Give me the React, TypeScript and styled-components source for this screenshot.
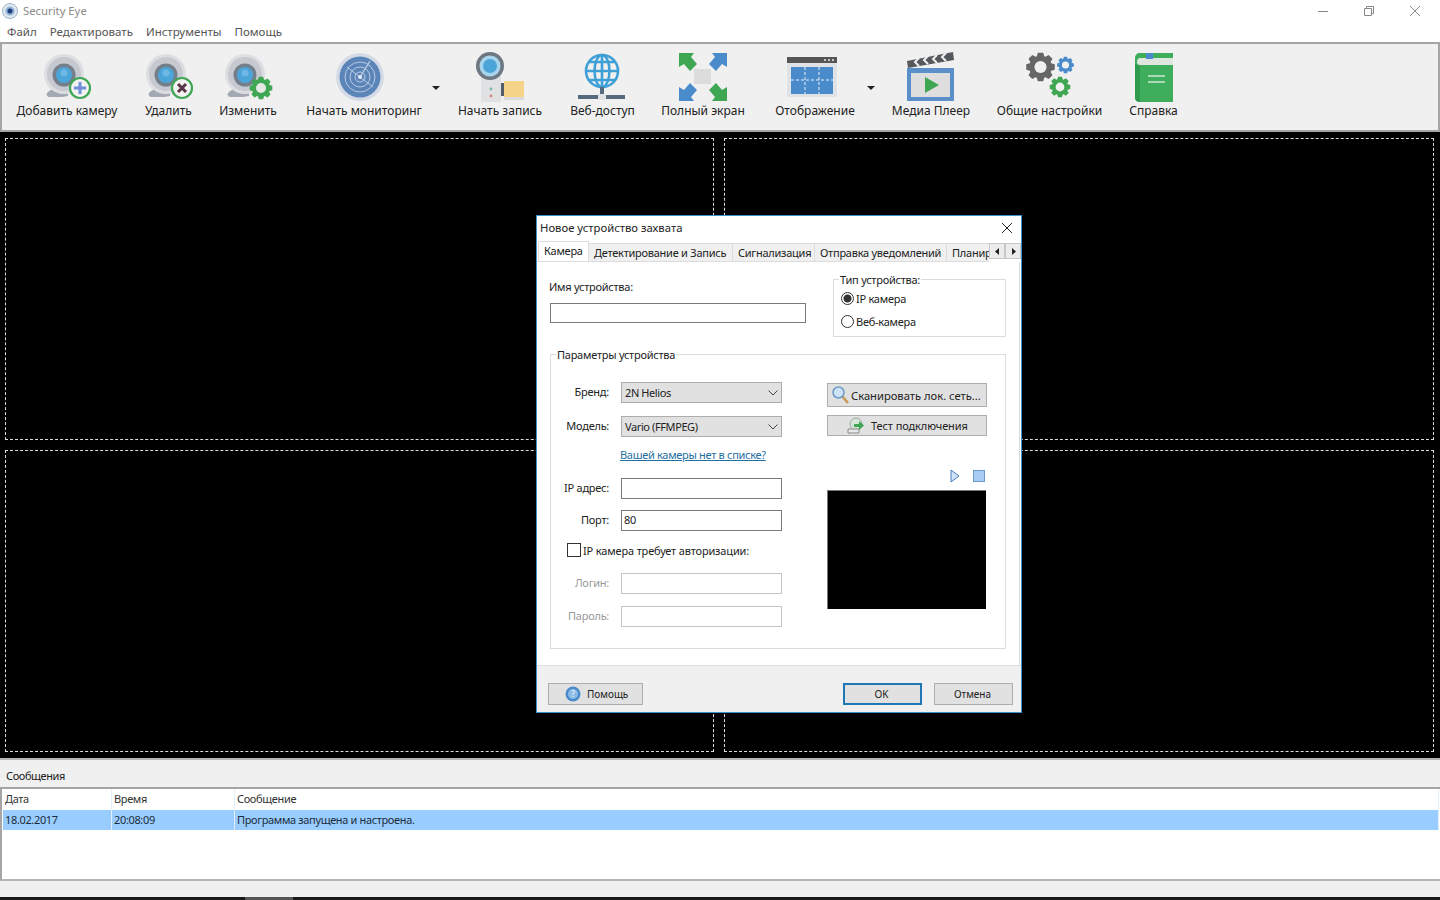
import styled, { createGlobalStyle } from "styled-components";

const GlobalStyle = createGlobalStyle`
  html, body {
    margin: 0;
    padding: 0;
    background: #f0f0f0;
    font-family: "Noto Sans", "Open Sans", "Liberation Sans", sans-serif;
    font-size: 11px;
    color: #222;
  }
  * { box-sizing: border-box; }
`;

const gearPath = (cx: number, cy: number, outer: number, inner: number, teeth: number) => {
  const points: string[] = [];
  const step = (Math.PI * 2) / teeth;
  for (let i = 0; i < teeth; i++) {
    const a = i * step;
    const corners: [number, number][] = [
      [inner, a - step * 0.42],
      [outer, a - step * 0.24],
      [outer, a + step * 0.24],
      [inner, a + step * 0.42],
    ];
    corners.forEach(([r, t]) => {
      points.push(`${(cx + r * Math.cos(t)).toFixed(2)} ${(cy + r * Math.sin(t)).toFixed(2)}`);
    });
  }
  return `M${points.join("L")}Z`;
};

const Gear = ({ cx, cy, r, color, hole }: { cx: number; cy: number; r: number; color: string; hole: string }) => (
  <>
    <path d={gearPath(cx, cy, r, r * 0.78, 8)} fill={color} />
    <circle cx={cx} cy={cy} r={r * 0.42} fill={hole} />
  </>
);

type Badge = "plus" | "cross" | "gear";

const WebcamIcon = ({ badge }: { badge: Badge }) => (
  <svg width="50" height="50" viewBox="-2 0 50 50">
    <path d="M3 41c3-4 9-5 15-5l6 2v6l-6 1H6c-3 0-4-2-3-4z" fill="#a3a9b3" />
    <circle cx="20" cy="22" r="20" fill="#dcdee2" />
    <circle cx="20" cy="22" r="17" fill="#c6c9cf" />
    <circle cx="20" cy="23" r="11.5" fill="#747f8b" />
    <circle cx="20" cy="23" r="8" fill="#4ca5d8" />
    <circle cx="20" cy="21" r="3.5" fill="#6db8e4" />
    {badge === "gear" ? (
      <>
        <path d={gearPath(36, 36, 11.5, 9, 8)} fill="#3fa653" />
        <circle cx="36" cy="36" r="5" fill="#e6e8e6" />
      </>
    ) : (
      <circle cx="36" cy="36" r="10" fill="#f2f2f2" stroke="#3fa653" strokeWidth="2.2" />
    )}
    {badge === "plus" && <path d="M36 30v12M30 36h12" stroke="#6f8fd6" strokeWidth="3" />}
    {badge === "cross" && <path d="M32 32l8 8M40 32l-8 8" stroke="#5a3346" strokeWidth="3" />}
  </svg>
);

const RadarIcon = () => (
  <svg width="58" height="50" viewBox="0 0 58 50">
    <circle cx="25" cy="25" r="24" fill="#d5dbe6" />
    <circle cx="25" cy="25" r="20.500" fill="#5b84b8" />
    <g fill="none" stroke="#b8cbe2" strokeWidth="1">
      <circle cx="25" cy="25" r="15" />
      <circle cx="25" cy="25" r="10" />
      <circle cx="25" cy="25" r="5" />
      <path d="M25 25l10-16" strokeWidth="1.400" />
      <path d="M12 15l26 20" />
    </g>
    <circle cx="25" cy="25" r="2" fill="#e4edf6" />
  </svg>
);

const RecordIcon = () => (
  <svg width="50" height="50" viewBox="0 0 50 50">
    <rect x="6" y="24" width="20" height="26" rx="1" fill="#e0e1e3" />
    <circle cx="16" cy="37" r="1.400" fill="#7ab8a8" />
    <circle cx="16" cy="44" r="1.400" fill="#d8827a" />
    <circle cx="15" cy="14" r="14" fill="#6e7882" />
    <circle cx="15" cy="14" r="10.500" fill="#a8d4ee" />
    <circle cx="15" cy="14" r="7" fill="#4ca5d8" />
    <rect x="26" y="31" width="3" height="13" fill="#555e68" />
    <rect x="29" y="29" width="20" height="16" fill="#f5d48a" />
    <rect x="29" y="45" width="20" height="3" fill="#dcdcdc" />
  </svg>
);

const GlobeIcon = () => (
  <svg width="50" height="50" viewBox="0 0 50 50">
    <g fill="none" stroke="#3fa0d8" strokeWidth="2.600">
      <circle cx="24" cy="19" r="16" />
      <ellipse cx="24" cy="19" rx="7.500" ry="16" />
      <path d="M24 3v32M8 19h32M11 10h26M11 28h26" />
    </g>
    <rect x="22" y="35" width="4" height="8" fill="#556a7c" />
    <rect x="0" y="43" width="47" height="4" fill="#556a7c" />
    <rect x="20" y="42" width="8" height="6" fill="#dfe3e6" />
  </svg>
);

const FullscreenIcon = () => (
  <svg width="50" height="50" viewBox="0 0 50 50">
    <rect x="16" y="17" width="17" height="15" fill="#dcdcdc" />
    <path d="M1 1h15l-3 4 6 7-7 7-6-7-5 3z" fill="#3fa653" />
    <path d="M49 1H34l3 4-6 7 7 7 6-7 5 3z" fill="#4a8ccb" />
    <path d="M1 49h15l-3-4 6-7-7-7-6 7-5-3z" fill="#4a8ccb" />
    <path d="M49 49H34l3-4-6-7 7-7 6 7 5-3z" fill="#3fa653" />
  </svg>
);

const DisplayIcon = () => (
  <svg width="56" height="50" viewBox="0 0 56 50">
    <rect x="0" y="5" width="50" height="40" fill="#dfe3e8" />
    <rect x="0" y="5" width="50" height="6" fill="#555" />
    <path d="M37 8h2M41 8h2M45 8h2" stroke="#eee" strokeWidth="1.600" />
    <rect x="4" y="15" width="42" height="27" fill="#4a8ccb" />
    <path d="M4 28h42M18 15v27M32 15v27" stroke="#e8f0f8" strokeWidth="1" strokeDasharray="3 2" />
  </svg>
);

const ClapperIcon = () => (
  <svg width="50" height="50" viewBox="0 0 50 50">
    <path d="M1 9l46-9 1 8-46 8z" fill="#55585c" />
    <path d="M13 6l-4 4 4 4M22 4l-4 4 4 4M31 3l-4 4 4 4M40 1l-4 4 4 4" fill="none" stroke="#f0f0f0" strokeWidth="2" />
    <rect x="1" y="16" width="47" height="33" fill="#5b8fc9" />
    <rect x="5" y="21" width="39" height="24" fill="#dedede" />
    <path d="M19 25l14 8-14 8z" fill="#3fa653" />
  </svg>
);

const GearsIcon = () => (
  <svg width="60" height="50" viewBox="0 0 60 50">
    <Gear cx={20.500} cy={15} r={14.500} color="#666" hole="#f0f0f0" />
    <Gear cx={45.500} cy={13} r={8.500} color="#4a8ccb" hole="#f0f0f0" />
    <Gear cx={40} cy={35} r={10.500} color="#3fa653" hole="#f0f0f0" />
  </svg>
);

const BookIcon = () => (
  <svg width="40" height="50" viewBox="0 0 40 50">
    <path d="M1 6c0-3 2-5 5-5h33v49H6c-3 0-5-2-5-4z" fill="#3fae5c" />
    <path d="M3 10c0-2 1-4 3-4h33v7H6c-2 0-3-1-3-3z" fill="#dfe5df" />
    <rect x="12" y="1" width="7" height="6" fill="#4a8ccb" />
    <path d="M14 24h17M14 30h17" stroke="#cfe8d6" strokeWidth="1.600" />
    <path d="M1 12v34c0 2 2 4 5 4V14z" fill="#2f9a4c" />
  </svg>
);

const SearchIcon = () => (
  <svg width="18" height="18" viewBox="0 0 18 18">
    <path d="M10 10l6 7" stroke="#c89a55" strokeWidth="2.600" />
    <circle cx="6.500" cy="6.500" r="5.500" fill="#cfe3f7" stroke="#6d9ac8" strokeWidth="1.500" />
  </svg>
);

const LinkTestIcon = () => (
  <svg width="18" height="18" viewBox="0 0 18 18">
    <circle cx="9" cy="7" r="6" fill="#d8e6d8" stroke="#9aa8a0" />
    <path d="M1 16h11v-4H1z" fill="#e8e8e8" stroke="#888" />
    <path d="M7 7h5V4l5 4.500-5 4.500v-3H7z" fill="#3fa653" />
  </svg>
);

const HelpIcon = () => (
  <svg width="16" height="16" viewBox="0 0 16 16">
    <circle cx="8" cy="8" r="7.500" fill="#4a8ccb" />
    <circle cx="8" cy="8" r="5" fill="#8dbce6" />
    <text x="8" y="11" fontSize="8" textAnchor="middle" fill="#fff">?</text>
  </svg>
);

const Chevron = () => (
  <svg width="10" height="6" viewBox="0 0 10 6">
    <path d="M0.500 0.500L5 5l4.500-4.500" fill="none" stroke="#444" />
  </svg>
);

const tools = [
  { label: "Добавить камеру", w: 128, icon: <WebcamIcon badge="plus" /> },
  { label: "Удалить", w: 75, icon: <WebcamIcon badge="cross" /> },
  { label: "Изменить", w: 84, icon: <WebcamIcon badge="gear" /> },
  { label: "Начать мониторинг", w: 148, caret: -6, icon: <RadarIcon /> },
  { label: "Начать запись", w: 124, icon: <RecordIcon /> },
  { label: "Веб-доступ", w: 81, icon: <GlobeIcon /> },
  { label: "Полный экран", w: 120, icon: <FullscreenIcon /> },
  { label: "Отображение", w: 104, caret: 0, icon: <DisplayIcon /> },
  { label: "Медиа Плеер", w: 112, icon: <ClapperIcon /> },
  { label: "Общие настройки", w: 125, icon: <GearsIcon /> },
  { label: "Справка", w: 83, icon: <BookIcon /> },
];

const tabs = ["Камера", "Детектирование и Запись", "Сигнализация", "Отправка уведомлений", "Планирование"];
const tabWidths = [51, 144, 82, 132, 60];

const App = () => {
  return (
    <Window>
      <GlobalStyle />
      <TitleBar>
        <AppLogo />
        <AppTitle>Security Eye</AppTitle>
        <WindowControls>
          <svg width="12" height="12" viewBox="0 0 12 12"><path d="M1 6.500h10" stroke="#888" /></svg>
          <svg width="12" height="12" viewBox="0 0 12 12"><path d="M1.500 3.500h7v7h-7zM3.500 3.500v-2h7v7h-2" fill="none" stroke="#888" /></svg>
          <svg width="12" height="12" viewBox="0 0 12 12"><path d="M1 1l10 10M11 1L1 11" stroke="#888" /></svg>
        </WindowControls>
      </TitleBar>
      <MenuBar>
        <span>Файл</span>
        <span>Редактировать</span>
        <span>Инструменты</span>
        <span>Помощь</span>
      </MenuBar>
      <Toolbar>
        {tools.map((tool) => (
          <ToolGroup key={tool.label}>
            <ToolItem $w={tool.w}>
              <ToolIcon>{tool.icon}</ToolIcon>
              <ToolLabel>{tool.label}</ToolLabel>
            </ToolItem>
            {tool.caret !== undefined && <Caret $pull={tool.caret} />}
          </ToolGroup>
        ))}
      </Toolbar>
      <VideoGrid>
        <VideoSlot />
        <VideoSlot />
        <VideoSlot />
        <VideoSlot />
      </VideoGrid>
      <MessagesHeader>Сообщения</MessagesHeader>
      <MessagesTable>
        <TableRow>
          <TableCell>Дата</TableCell>
          <TableCell>Время</TableCell>
          <TableCell>Сообщение</TableCell>
        </TableRow>
        <TableRow $selected>
          <TableCell>18.02.2017</TableCell>
          <TableCell>20:08:09</TableCell>
          <TableCell>Программа запущена и настроена.</TableCell>
        </TableRow>
      </MessagesTable>
      <StatusBar />
      <TaskStrip>
        <TaskThumb />
      </TaskStrip>

      <Dialog>
        <DialogTitle>
          Новое устройство захвата
          <svg width="12" height="12" viewBox="0 0 12 12"><path d="M1 1l10 10M11 1L1 11" stroke="#222" /></svg>
        </DialogTitle>
        <TabStrip>
          <TabList>
            {tabs.map((tab, i) => (
              <Tab key={tab} $active={i === 0} $w={tabWidths[i]}>{tab}</Tab>
            ))}
          </TabList>
          <TabArrow>
            <svg width="5" height="7" viewBox="0 0 5 7"><path d="M4 0v7L0 3.500z" fill="#222" /></svg>
          </TabArrow>
          <TabArrow>
            <svg width="5" height="7" viewBox="0 0 5 7"><path d="M1 0v7l4-3.500z" fill="#222" /></svg>
          </TabArrow>
        </TabStrip>
        <TabPanel>
          <TopRow>
            <NameColumn>
              <FieldCaption>Имя устройства:</FieldCaption>
              <NameInput />
            </NameColumn>
            <TypeGroup>
              <GroupLegend>Тип устройства:</GroupLegend>
              <RadioRow>
                <Radio $checked />
                IP камера
              </RadioRow>
              <RadioRow>
                <Radio />
                Веб-камера
              </RadioRow>
            </TypeGroup>
          </TopRow>
          <ParamsGroup>
            <GroupLegend>Параметры устройства</GroupLegend>
            <FormColumn>
              <FormRow>
                <RowLabel>Бренд:</RowLabel>
                <SelectBox>
                  <span>2N Helios</span>
                  <Chevron />
                </SelectBox>
              </FormRow>
              <FormRow $mt={13}>
                <RowLabel>Модель:</RowLabel>
                <SelectBox>
                  <span>Vario (FFMPEG)</span>
                  <Chevron />
                </SelectBox>
              </FormRow>
              <LinkRow>Вашей камеры нет в списке?</LinkRow>
              <FormRow $mt={13}>
                <RowLabel>IP адрес:</RowLabel>
                <TextField />
              </FormRow>
              <FormRow $mt={11}>
                <RowLabel>Порт:</RowLabel>
                <TextField>80</TextField>
              </FormRow>
              <CheckRow>
                <CheckBox />
                IP камера требует авторизации:
              </CheckRow>
              <FormRow $mt={12}>
                <RowLabel $disabled>Логин:</RowLabel>
                <TextField $disabled />
              </FormRow>
              <FormRow $mt={12}>
                <RowLabel $disabled>Пароль:</RowLabel>
                <TextField $disabled />
              </FormRow>
            </FormColumn>
            <SideColumn>
              <ScanButton>
                <SearchIcon />
                Сканировать лок. сеть...
              </ScanButton>
              <TestButton>
                <LinkTestIcon />
                <span>Тест подключения</span>
              </TestButton>
              <PreviewControls>
                <svg width="10" height="14" viewBox="0 0 10 14"><path d="M1 1l8 6-8 6z" fill="#cfe2f7" stroke="#4a7fb8" /></svg>
                <svg width="12" height="12" viewBox="0 0 12 12"><rect x="0.500" y="0.500" width="11" height="11" fill="#a9cdf2" stroke="#6d9ac8" /></svg>
              </PreviewControls>
              <Preview />
            </SideColumn>
          </ParamsGroup>
        </TabPanel>
        <DialogFooter>
          <HelpButton>
            <HelpIcon />
            Помощь
          </HelpButton>
          <FooterActions>
            <FooterButton $primary>OK</FooterButton>
            <FooterButton>Отмена</FooterButton>
          </FooterActions>
        </DialogFooter>
      </Dialog>
    </Window>
  );
};

export default App;

const Window = styled.div`
  position: relative;
  width: 1440px;
  height: 900px;
  display: flex;
  flex-direction: column;
  overflow: hidden;
  background: #f0f0f0;
`;

const TitleBar = styled.div`
  height: 22px;
  background: #fff;
  display: flex;
  align-items: center;
  padding-left: 2px;
`;

const AppLogo = styled.div`
  width: 16px;
  height: 16px;
  border-radius: 50%;
  background: radial-gradient(circle, #1f3f7a 0 2px, #8fb2d8 3px 4px, #dfe7ef 5px 8px);
  border: 1px solid #9cb4c8;
`;

const AppTitle = styled.div`
  margin-left: 5px;
  padding-bottom: 1px;
  color: #8a8a8a;
  font-size: 11.300px;
`;

const WindowControls = styled.div`
  margin-left: auto;
  padding-right: 19px;
  display: flex;
  gap: 34px;
  svg {
    display: block;
  }
`;

const MenuBar = styled.div`
  height: 20px;
  background: #fff;
  display: flex;
  align-items: center;
  gap: 13px;
  padding: 0 0 1px 7px;
  color: #555;
  font-size: 11.500px;
`;

const Toolbar = styled.div`
  height: 90px;
  border: 2px solid #a5a5a5;
  background: #f0f0f0;
  display: flex;
  align-items: flex-start;
  padding: 8px 0 0 1px;
`;

const ToolGroup = styled.div`
  display: flex;
  align-items: flex-start;
`;

const ToolItem = styled.div<{ $w: number }>`
  width: ${(p) => p.$w}px;
  display: flex;
  flex-direction: column;
  align-items: center;
`;

const ToolIcon = styled.div`
  height: 50px;
  display: flex;
  justify-content: center;
  svg {
    display: block;
  }
`;

const ToolLabel = styled.div`
  margin-top: 1px;
  font-size: 12px;
  line-height: 16px;
  white-space: nowrap;
  color: #222;
`;

const Caret = styled.div<{ $pull: number }>`
  width: 8px;
  height: 4px;
  flex: none;
  margin-top: 34px;
  margin-left: ${(p) => p.$pull}px;
  margin-right: ${(p) => (p.$pull ? -2 : 0)}px;
  border-left: 4px solid transparent;
  border-right: 4px solid transparent;
  border-top: 4px solid #222;
`;

const VideoGrid = styled.div`
  height: 626px;
  background: #000;
  display: grid;
  grid-template-columns: 709px 710px;
  grid-template-rows: 302px 302px;
  gap: 10px;
  padding: 6px 6px 6px 5px;
`;

const VideoSlot = styled.div`
  border: 1px dashed #dcdcdc;
`;

const MessagesHeader = styled.div`
  height: 29px;
  border-top: 2px solid #b5b5b5;
  display: flex;
  align-items: center;
  padding: 3px 0 0 6px;
  background: #f0f0f0;
  letter-spacing: -0.400px;
`;

const MessagesTable = styled.div`
  height: 94px;
  background: #fff;
  border-top: 2px solid #a5a5a5;
  border-bottom: 2px solid #b5b5b5;
  border-left: 2px solid #a5a5a5;
  padding: 0 1px;
  display: flex;
  flex-direction: column;
`;

const TableRow = styled.div<{ $selected?: boolean }>`
  height: ${(p) => (p.$selected ? 20 : 21)}px;
  display: grid;
  grid-template-columns: 109px 123px 1fr;
  background: ${(p) => (p.$selected ? "#99ccff" : "#fff")};
  color: ${(p) => (p.$selected ? "#1c2c3c" : "#333")};
`;

const TableCell = styled.div`
  display: flex;
  align-items: center;
  padding: 0 0 2px 2px;
  border-right: 1px solid #e4eef8;
  letter-spacing: -0.350px;
`;

const StatusBar = styled.div`
  height: 16px;
  background: #f0f0f0;
`;

const TaskStrip = styled.div`
  height: 3px;
  background: #1a1a1a;
  padding-left: 245px;
`;

const TaskThumb = styled.div`
  width: 48px;
  height: 3px;
  background: #555;
`;

const Dialog = styled.div`
  position: absolute;
  left: 536px;
  top: 215px;
  width: 486px;
  height: 498px;
  background: #fff;
  border: 1px solid #3f8fc8;
  display: flex;
  flex-direction: column;
  letter-spacing: -0.250px;
`;

const DialogTitle = styled.div`
  height: 25px;
  display: flex;
  align-items: center;
  justify-content: space-between;
  padding: 0 8px 2px 3px;
  color: #222;
  font-size: 11.300px;
  letter-spacing: 0;
`;

const TabStrip = styled.div`
  height: 21px;
  display: flex;
  align-items: flex-start;
  background: #fff;
`;

const TabList = styled.div`
  width: 452px;
  height: 21px;
  display: flex;
  overflow: hidden;
  align-items: flex-end;
  padding-left: 1px;
  border-bottom: 1px solid #dcdcdc;
`;

const Tab = styled.div<{ $active?: boolean; $w: number }>`
  width: ${(p) => p.$w}px;
  flex: none;
  height: ${(p) => (p.$active ? 20 : 18)}px;
  background: ${(p) => (p.$active ? "#fff" : "#f0f0f0")};
  border: 1px solid #dcdcdc;
  border-bottom: none;
  border-left-width: ${(p) => (p.$active ? 1 : 0)}px;
  display: flex;
  align-items: center;
  padding-left: 5px;
  padding-bottom: ${(p) => (p.$active ? 2 : 0)}px;
  white-space: nowrap;
  overflow: hidden;
`;

const TabArrow = styled.div`
  width: 16px;
  height: 16px;
  margin-top: 2px;
  background: #ececec;
  border: 1px solid #c8c8c8;
  display: flex;
  align-items: center;
  justify-content: center;
`;

const TabPanel = styled.div`
  height: 403px;
  margin-right: 1px;
  border-right: 1px solid #dcdcdc;
  padding: 17px 13px 0 13px;
  display: flex;
  flex-direction: column;
`;

const TopRow = styled.div`
  display: flex;
  justify-content: space-between;
  height: 58px;
`;

const NameColumn = styled.div`
  width: 256px;
`;

const FieldCaption = styled.div`
  line-height: 16px;
  margin-left: -1px;
`;

const NameInput = styled.div`
  width: 256px;
  height: 20px;
  margin-top: 8px;
  border: 1px solid #7a7a7a;
  background: #fff;
`;

const TypeGroup = styled.div`
  position: relative;
  width: 173px;
  height: 58px;
  border: 1px solid #dcdcdc;
  padding: 8px 0 0 7px;
  display: flex;
  flex-direction: column;
  gap: 3px;
`;

const GroupLegend = styled.div`
  position: absolute;
  left: 5px;
  top: -8px;
  background: #fff;
  padding: 0 1px;
  line-height: 16px;
`;

const RadioRow = styled.div`
  height: 20px;
  display: flex;
  align-items: center;
  gap: 2px;
`;

const Radio = styled.span<{ $checked?: boolean }>`
  width: 13px;
  height: 13px;
  border-radius: 50%;
  border: 1px solid #333;
  background: ${(p) => (p.$checked ? "radial-gradient(circle, #333 0 3.500px, #fff 4.500px)" : "#fff")};
  flex: none;
`;

const ParamsGroup = styled.div`
  position: relative;
  margin-top: 17px;
  height: 295px;
  border: 1px solid #dcdcdc;
  padding: 27px 0 0 0;
  display: flex;
  gap: 45px;
`;

const FormColumn = styled.div`
  display: flex;
  flex-direction: column;
  width: 231px;
`;

const FormRow = styled.div<{ $mt?: number }>`
  height: 21px;
  margin-top: ${(p) => p.$mt ?? 0}px;
  display: flex;
  align-items: center;
  gap: 12px;
`;

const RowLabel = styled.div<{ $disabled?: boolean }>`
  width: 58px;
  padding-bottom: 2px;
  text-align: right;
  white-space: nowrap;
  color: ${(p) => (p.$disabled ? "#9a9a9a" : "#222")};
`;

const SelectBox = styled.div`
  width: 161px;
  height: 21px;
  background: #e1e1e1;
  border: 1px solid #adadad;
  display: flex;
  align-items: center;
  justify-content: space-between;
  padding: 0 3px;
  letter-spacing: -0.400px;
`;

const TextField = styled.div<{ $disabled?: boolean }>`
  width: 161px;
  height: 21px;
  background: #fff;
  border: 1px solid ${(p) => (p.$disabled ? "#c4c4c4" : "#7a7a7a")};
  display: flex;
  align-items: center;
  padding: 0 0 2px 2px;
`;

const LinkRow = styled.div`
  height: 20px;
  margin-top: 8px;
  padding-left: 69px;
  line-height: 20px;
  color: #1f6f9f;
  text-decoration: underline;
  white-space: nowrap;
  letter-spacing: -0.300px;
`;

const CheckRow = styled.div`
  height: 20px;
  margin-top: 10px;
  padding: 0 0 2px 16px;
  display: flex;
  align-items: center;
  gap: 2px;
  white-space: nowrap;
  letter-spacing: -0.150px;
`;

const CheckBox = styled.span`
  width: 14px;
  height: 14px;
  border: 1px solid #333;
  background: #fff;
  flex: none;
`;

const SideColumn = styled.div`
  width: 160px;
  padding-top: 1px;
  display: flex;
  flex-direction: column;
`;

const ScanButton = styled.div`
  height: 24px;
  background: #e1e1e1;
  border: 1px solid #adadad;
  display: flex;
  align-items: center;
  gap: 1px;
  padding-left: 4px;
  white-space: nowrap;
  letter-spacing: 0;
  font-size: 11.200px;
`;

const TestButton = styled.div`
  height: 21px;
  margin-top: 8px;
  background: #e1e1e1;
  border: 1px solid #adadad;
  display: flex;
  align-items: center;
  gap: 6px;
  padding-left: 19px;
  white-space: nowrap;
  letter-spacing: -0.100px;
`;

const PreviewControls = styled.div`
  height: 14px;
  margin-top: 33px;
  display: flex;
  align-items: center;
  justify-content: flex-end;
  gap: 13px;
  padding-right: 2px;
`;

const Preview = styled.div`
  width: 159px;
  height: 119px;
  margin-top: 7px;
  background: #000;
  border-top: 1px solid #777;
  border-left: 1px solid #777;
`;

const DialogFooter = styled.div`
  flex: 1;
  background: #f0f0f0;
  border-top: 1px solid #dfdfdf;
  display: flex;
  align-items: flex-start;
  justify-content: space-between;
  padding: 17px 8px 0 11px;
  font-size: 10px;
  letter-spacing: 0;
`;

const FooterActions = styled.div`
  display: flex;
  gap: 12px;
`;

const HelpButton = styled.div`
  width: 95px;
  height: 22px;
  background: #e1e1e1;
  border: 1px solid #adadad;
  display: flex;
  align-items: center;
  gap: 6px;
  padding-left: 16px;
`;

const FooterButton = styled.div<{ $primary?: boolean }>`
  width: 79px;
  height: 22px;
  background: #e1e1e1;
  border: ${(p) => (p.$primary ? "2px solid #1f78b4" : "1px solid #adadad")};
  display: flex;
  align-items: center;
  justify-content: center;
  padding-right: 2px;
`;
